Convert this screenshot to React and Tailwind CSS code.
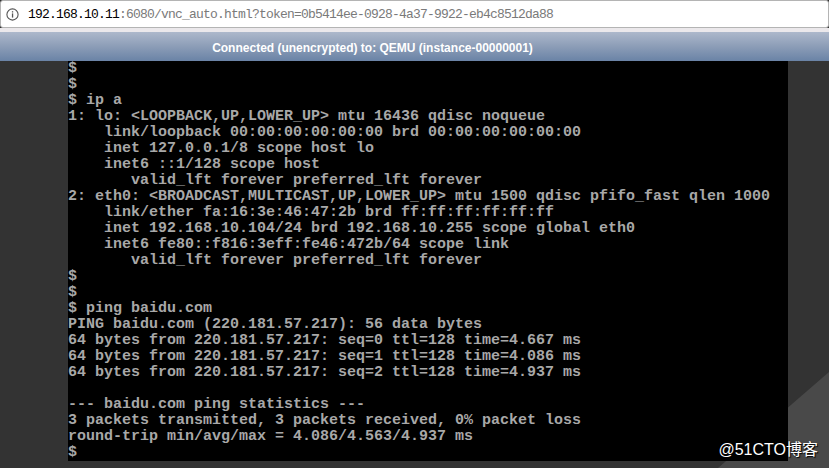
const lines = [
  "$",
  "$",
  "$ ip a",
  "1: lo: <LOOPBACK,UP,LOWER_UP> mtu 16436 qdisc noqueue",
  "    link/loopback 00:00:00:00:00:00 brd 00:00:00:00:00:00",
  "    inet 127.0.0.1/8 scope host lo",
  "    inet6 ::1/128 scope host",
  "       valid_lft forever preferred_lft forever",
  "2: eth0: <BROADCAST,MULTICAST,UP,LOWER_UP> mtu 1500 qdisc pfifo_fast qlen 1000",
  "    link/ether fa:16:3e:46:47:2b brd ff:ff:ff:ff:ff:ff",
  "    inet 192.168.10.104/24 brd 192.168.10.255 scope global eth0",
  "    inet6 fe80::f816:3eff:fe46:472b/64 scope link",
  "       valid_lft forever preferred_lft forever",
  "$",
  "$",
  "$ ping baidu.com",
  "PING baidu.com (220.181.57.217): 56 data bytes",
  "64 bytes from 220.181.57.217: seq=0 ttl=128 time=4.667 ms",
  "64 bytes from 220.181.57.217: seq=1 ttl=128 time=4.086 ms",
  "64 bytes from 220.181.57.217: seq=2 ttl=128 time=4.937 ms",
  "",
  "--- baidu.com ping statistics ---",
  "3 packets transmitted, 3 packets received, 0% packet loss",
  "round-trip min/avg/max = 4.086/4.563/4.937 ms",
  "$",
];

export default function App() {
  return (
    <div className="w-[829px] h-[468px] flex flex-col overflow-hidden bg-[#333333]">
      {/* Address bar */}
      <div className="h-[28px] bg-white border border-[#b4b4b4] rounded-[3px] flex items-center pl-[5px] shrink-0">
        <svg width="13" height="13" viewBox="0 0 13 13" className="mr-[9px]">
          <circle cx="6.5" cy="6.5" r="5.6" fill="none" stroke="#555" strokeWidth="1.1" />
          <rect x="5.9" y="5.4" width="1.3" height="4.2" fill="#555" />
          <rect x="5.9" y="3.2" width="1.3" height="1.3" fill="#555" />
        </svg>
        <span className="font-['Liberation_Mono',monospace] text-[13px] tracking-[-0.8px] leading-none text-black whitespace-pre pt-[1px]">
          192.168.10.11
          <span className="text-[#7a7a7a]">:6080/vnc_auto.html?token=0b5414ee-0928-4a37-9922-eb4c8512da88</span>
        </span>
      </div>
      <div className="h-[4px] bg-[#ebe8eb] shrink-0" />

      {/* noVNC status bar */}
      <div className="h-[29px] shrink-0 bg-gradient-to-b from-[#adb8cb] via-[#8c9db7] to-[#6a83a6] flex items-center justify-center pt-[3px] pr-[84px]">
        <span className="font-['Liberation_Sans',Arial,sans-serif] font-bold text-[12px] text-white">
          Connected (unencrypted) to: QEMU (instance-00000001)
        </span>
      </div>

      {/* Screen area */}
      <div className="relative flex-1 bg-[#333333]">
        <svg className="absolute inset-0" width="829" height="407">
          <polygon points="829,311 829,407 718,407" fill="#494949" />
        </svg>
        <div className="relative ml-[68px] w-[720px] h-[400px] bg-black overflow-hidden font-['Liberation_Mono',monospace] font-bold text-[15px] leading-[16px] text-[#a8a8a8] whitespace-pre">
          {lines.map((l, i) => (
            <div key={i} className="h-[16px]">{l}</div>
          ))}
        </div>
        <div className="absolute right-[11px] bottom-[10px] text-white text-[16px] leading-none font-['Liberation_Sans','Noto_Sans_CJK_SC',sans-serif] [text-shadow:1px_1px_1px_#000]">
          @51CTO博客
        </div>
      </div>
    </div>
  );
}
